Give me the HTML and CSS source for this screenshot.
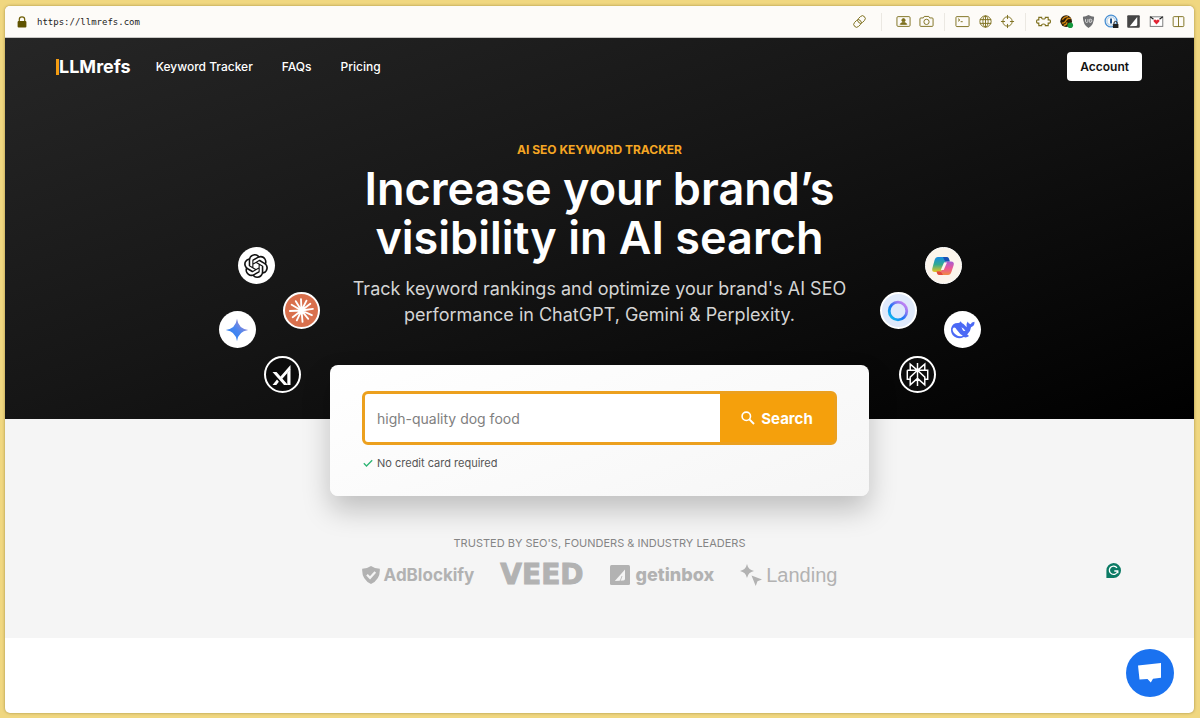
FILE: index.html
```html
<!DOCTYPE html>
<html lang="en">
<head>
    <meta charset="UTF-8">
    <meta name="viewport" content="width=device-width, initial-scale=1.0">
    <title>LLMrefs</title>
    <link rel="stylesheet" href="styles.css">
</head>
<body>

    <div class="window">
        <!-- Browser toolbar -->
        <div class="toolbar">
            <svg class="lock" viewBox="0 0 10 12"><path d="M2.3 6V3.6a2.7 2.7 0 0 1 5.4 0V6" fill="none" stroke="#6f5f08" stroke-width="1.2"/><rect x=".6" y="5" width="8.8" height="6.6" rx="1" fill="#5f5200"/></svg>
            <span class="url">https://llmrefs.com</span>

            <div class="tools tools-one">
                <svg viewBox="0 0 16 16"><g transform="rotate(-45 8 8)"><rect x=".6" y="5" width="8.8" height="6" rx="3"/><rect x="6.6" y="5" width="8.8" height="6" rx="3"/></g></svg>
            </div>
            <span class="divider divider-wide"></span>
            <div class="tools tools-two">
                <svg viewBox="0 0 16 16"><rect x="1" y="2.8" width="14" height="10.4" rx="1.2"/><path d="M3.4 5v-.1M12.6 5v-.1M3.4 11v-.1M12.6 11v-.1"/><circle cx="8" cy="6.6" r="1.7" fill="#7d6f1d"/><path d="M4.6 11q.6-2 3.4-2t3.4 2z" fill="#7d6f1d"/></svg>
                <svg viewBox="0 0 16 16"><path d="M1 5.2q0-1 1-1h2.6l1-1.6h4.8l1 1.6H14q1 0 1 1v7q0 1-1 1H2q-1 0-1-1z"/><circle cx="8" cy="8.4" r="2.8"/><path d="M12.8 6.2v-.1"/></svg>
            </div>
            <span class="divider"></span>
            <div class="tools tools-three">
                <svg viewBox="0 0 16 16"><rect x="1" y="2.8" width="14" height="10.6" rx="1"/><path d="M3.2 5l2 1.4-2 1.4M6 8.2h2.2"/></svg>
                <svg viewBox="0 0 16 16"><circle cx="8" cy="8" r="6"/><ellipse cx="8" cy="8" rx="2.8" ry="6"/><path d="M2 6h12M2 10h12M8 2v12"/></svg>
                <svg viewBox="0 0 16 16"><circle cx="8" cy="8" r="5"/><path d="M8 1v4.4M8 10.6V15M1 8h4.4M10.6 8H15"/></svg>
            </div>
            <span class="divider"></span>
            <div class="tools tools-four">
                <svg viewBox="0 0 16 16"><path d="M3 3.6h3q-.2 1.700 2 1.700t2-1.700h3v2.700q2.400-.5 2.400 1.700T13 9.700v2.700h-3q.2-1.700-2-1.700t-2 1.700H3V9.700Q.6 10.200.6 8T3 6.300z" stroke-width="1.200"/></svg>
                <svg viewBox="0 0 16 16"><circle cx="7.600" cy="7.600" r="6.200" fill="#2c1d08" stroke="none"/><path d="M3.500 6q3-4 6-3M3 9.500q3 1 4.500-2.500T12.500 5M5 12q3 0 3.500-3" stroke="#d58a13" stroke-width="1.500"/><circle cx="12" cy="12" r="3" fill="#15983e" stroke="none"/></svg>
                <svg viewBox="0 0 16 16"><path d="M8 1q3 1.900 6 1.900 0 8.500-6 12.100Q2 11.400 2 2.900 5 2.900 8 1z" fill="#6f7072" stroke="none"/><path d="M4.800 5.500v2.300q0 1.200 1.300 1.200t1.300-1.200V5.500M9.300 5.500V9h.8q1.500 0 1.500-1.800T10 5.500z" stroke="#ddd"/></svg>
                <svg viewBox="0 0 16 16"><circle cx="7.500" cy="7.500" r="6.300" stroke="#4b91d4" stroke-width="1.400"/><circle cx="7.500" cy="7.500" r="4.400" stroke="#9cc3e8"/><path d="M7.500 4.800v5.400" stroke="#174a85" stroke-width="2"/><path d="M10.600 11V9.700a1.800 1.800 0 0 1 3.600 0V11" stroke="#222"/><rect x="9.500" y="10.600" width="5.900" height="4.400" rx=".6" fill="#222" stroke="none"/></svg>
                <svg viewBox="0 0 16 16"><rect x="1.300" y="1.300" width="13.400" height="13.400" rx="1" fill="#454545" stroke="none"/><path d="M12 3.200v8.200q0 1.200-1.200 1.300L4 13z" fill="#fff" stroke="none"/></svg>
                <svg viewBox="0 0 16 16"><rect x="1.300" y="3" width="13.400" height="10.200" fill="#fff" stroke="#777"/><path d="M1.300 3l3.500 2.600M14.700 3l-3.500 2.600" stroke="#222" stroke-width="1.300"/><path d="M8 11.200L5 8.100q-.8-1.700.8-2.100 1.400-.3 2.200 1 .8-1.300 2.200-1 1.600.4.8 2.100z" fill="#e12535" stroke="none"/></svg>
                <svg viewBox="0 0 16 16"><rect x="2.300" y="2.800" width="11.400" height="10.600" rx="1"/><path d="M8 2.800v10.600"/></svg>
            </div>
        </div>

        <header class="hero">
            <nav class="nav">
                <a class="brand" href="#">LLMrefs</a>
                <a href="#">Keyword Tracker</a>
                <a href="#">FAQs</a>
                <a href="#">Pricing</a>
                <a class="account" href="#">Account</a>
            </nav>

            <div class="hero-row">
                <!-- Left engines -->
                <div class="engines">
                    <div class="engine-col lean-left">
                        <span class="engine"><svg viewBox="0 0 24 24" width="24" height="24"><path fill="#111" d="M22.2819 9.8211a5.9847 5.9847 0 0 0-.5157-4.9108 6.0462 6.0462 0 0 0-6.5098-2.9A6.0651 6.0651 0 0 0 4.9807 4.1818a5.9847 5.9847 0 0 0-3.9977 2.9 6.0462 6.0462 0 0 0 .7427 7.0966 5.98 5.98 0 0 0 .511 4.9107 6.051 6.051 0 0 0 6.5146 2.9001A5.9847 5.9847 0 0 0 13.2599 24a6.0557 6.0557 0 0 0 5.7718-4.2058 5.9894 5.9894 0 0 0 3.9977-2.9001 6.0557 6.0557 0 0 0-.7475-7.0729zm-9.022 12.6081a4.4755 4.4755 0 0 1-2.8764-1.0408l.1419-.0804 4.7783-2.7582a.7948.7948 0 0 0 .3927-.6813v-6.7369l2.02 1.1686a.071.071 0 0 1 .038.052v5.5826a4.504 4.504 0 0 1-4.4945 4.4944zm-9.6607-4.1254a4.4708 4.4708 0 0 1-.5346-3.0137l.142.0852 4.783 2.7582a.7712.7712 0 0 0 .7806 0l5.8428-3.3685v2.3324a.0804.0804 0 0 1-.0332.0615L9.74 19.9502a4.4992 4.4992 0 0 1-6.1408-1.6464zM2.3408 7.8956a4.485 4.485 0 0 1 2.3655-1.9728V11.6a.7664.7664 0 0 0 .3879.6765l5.8144 3.3543-2.0201 1.1685a.0757.0757 0 0 1-.071 0l-4.8303-2.7865A4.504 4.504 0 0 1 2.3408 7.872zm16.5963 3.8558L13.1038 8.364 15.1192 7.2a.0757.0757 0 0 1 .071 0l4.8303 2.7913a4.4944 4.4944 0 0 1-.6765 8.1042v-5.6772a.79.79 0 0 0-.407-.667zm2.0107-3.0231l-.142-.0852-4.7735-2.7818a.7759.7759 0 0 0-.7854 0L9.409 9.2297V6.8974a.0662.0662 0 0 1 .0284-.0615l4.8303-2.7866a4.4992 4.4992 0 0 1 6.6802 4.66zM8.3065 12.863l-2.02-1.1638a.0804.0804 0 0 1-.038-.0567V6.0742a4.4992 4.4992 0 0 1 7.3757-3.4537l-.142.0805L8.704 5.459a.7948.7948 0 0 0-.3927.6813zm1.0976-2.3654l2.602-1.4998 2.6069 1.4998v2.9994l-2.5974 1.4997-2.6067-1.4997Z"/></svg></span>
                        <span class="engine"><svg viewBox="0 0 24 24" width="24" height="24"><defs><linearGradient id="gem" x1="0" y1="1" x2="1" y2="0"><stop offset="0" stop-color="#1c7df2"/><stop offset=".5" stop-color="#4a86f0"/><stop offset="1" stop-color="#c58ac0"/></linearGradient></defs><path d="M12 .8Q13.300 10.700 23.200 12 13.300 13.300 12 23.200 10.700 13.300.8 12 10.700 10.700 12 .8z" fill="url(#gem)"/></svg></span>
                    </div>
                    <div class="engine-col engine-low lean-left">
                        <span class="engine claude"><svg viewBox="0 0 26 26" width="27" height="27"><path d="M13 13L12.500 2M13 13l4.800-9.500M13 13l8.500-6.500M13 13l11-1.500M13 13l10 4.500M13 13l6.500 8M13 13l1 11M13 13L8.500 22.500M13 13l-8.500 6.500M13 13L1.800 13.500M13 13L3.500 7.500M13 13L7.500 4" stroke="#fff" stroke-width="1.800" stroke-linecap="round"/></svg></span>
                        <span class="engine dark"><svg viewBox="0 0 24 24" width="24" height="24"><path d="M2.500 9h4L18 22h-4zM2.500 22h3.800l2.600-3.200L7 16.500zM10.500 13.500L20.500 2v4.500l-8.200 9.200z" fill="#fff"/><path d="M17.300 10l3.200-4v16h-3.200z" fill="#fff"/></svg></span>
                    </div>
                </div>

                <div class="hero-text">
                    <p class="eyebrow">AI SEO KEYWORD TRACKER</p>
                    <h1>Increase your brand’s<br>visibility in AI search</h1>
                    <p class="lead">Track keyword rankings and optimize your brand's AI SEO<br>performance in ChatGPT, Gemini &amp; Perplexity.</p>
                </div>

                <!-- Right engines -->
                <div class="engines">
                    <div class="engine-col engine-low lean-right">
                        <span class="engine meta"><svg viewBox="0 0 24 24" width="24" height="24"><defs><linearGradient id="ring" x1="0" y1="1" x2="1" y2="0"><stop offset="0" stop-color="#08cbea"/><stop offset=".45" stop-color="#1f72f5"/><stop offset=".7" stop-color="#8b7af4"/><stop offset="1" stop-color="#e38af2"/></linearGradient></defs><circle cx="12" cy="12" r="8.800" fill="none" stroke="url(#ring)" stroke-width="2.800"/></svg></span>
                        <span class="engine dark"><svg viewBox="0 0 24 24" width="25" height="25"><path d="M12 1v22M12 8L5 2v6M12 8l7-6v6M2.200 8h19.600v8.500H19M2.200 8v8.500H5M12 8l-7 6.500V22l7-6.300M12 8l7 6.500V22l-7-6.300" fill="none" stroke="#fff" stroke-width="1.400"/></svg></span>
                    </div>
                    <div class="engine-col lean-right">
                        <span class="engine copilot"><svg viewBox="0 0 24 24" width="24" height="24"><defs><linearGradient id="cpa" x1="0" y1="0" x2="0" y2="1"><stop offset="0" stop-color="#178be3"/><stop offset=".5" stop-color="#31aa91"/><stop offset="1" stop-color="#ebc51d"/></linearGradient><linearGradient id="cpb" x1="0" y1="0" x2="0" y2="1"><stop offset="0" stop-color="#a65bd5"/><stop offset=".5" stop-color="#eb5796"/><stop offset="1" stop-color="#f18a42"/></linearGradient></defs><path d="M7 3h8.500q2 0 2.500 2l.7 2.500h-3q-2 0-2.600 2l-2 6.500q-.7 2-2.600 2H4Q.5 18 1.300 14.500L3.600 6Q4.500 3 7 3z" fill="url(#cpa)"/><path d="M12 3h3.500q2 0 2.500 2l.7 2.500h-3q-1.700 0-2.300-1.500z" fill="#1b4eb4"/><path d="M17 21H8.500q-2 0-2.500-2l-.4-1.500h3q2 0 2.600-2l2-6q.7-2 2.600-2H20q3.500 0 2.700 3.500L20.400 18Q19.500 21 17 21z" fill="url(#cpb)"/><path d="M12 21H8.500q-2 0-2.500-2l-.4-1.500h3q1.500 0 2.200 1.500z" fill="#e2493c"/><path d="M13 8.500h3l-3.300 7.500H9.800z" fill="#fcf5ec"/></svg></span>
                        <span class="engine"><svg viewBox="0 0 24 24" width="25" height="25"><path d="M1 11Q2.500 5.500 8 5.800q1.500-.2 2.300-1.800Q11 6 13 6.800l3 3Q15.200 6.500 17 4.300q.5 2.200 2.800 2.600Q20.500 5 23.500 4.600 24 8.500 20.200 9.800 19.800 14 16.500 16.800l1.800 1.500q-2.500 2-5 1Q8 21.800 4 18.800.5 16 1 11z" fill="#4b69f5"/><path d="M2.500 11.500q1.800-3 4 .7 3.200 4.500 5.800 5.700-3.300 1.600-6.500-.8-3.300-2.300-3.300-5.600z" fill="#fff"/><path d="M11 9.800q2.500.8 3.800 3.700-2.300.3-2.700-1.300z" fill="#fff"/></svg></span>
                    </div>
                </div>
            </div>
        </header>

        <main class="content">
            <form class="card">
                <div class="search">
                    <input class="search-input" type="text" placeholder="high-quality dog food" aria-label="Keyword">
                    <button class="search-button" type="button">
                        <svg viewBox="0 0 14 14" width="14" height="14"><circle cx="5.300" cy="5.300" r="4.200" fill="none" stroke="#fff" stroke-width="1.600"/><path d="M8.400 8.400l4.600 4.600" stroke="#fff" stroke-width="1.900"/></svg>
                        Search
                    </button>
                </div>
                <p class="note">
                    <svg viewBox="0 0 10 8" width="10" height="8"><path d="M.8 4.200L3.500 7 9.200 1.200" fill="none" stroke="#2db574" stroke-width="1.300"/></svg>
                    No credit card required
                </p>
            </form>

            <p class="trusted">TRUSTED BY SEO'S, FOUNDERS &amp; INDUSTRY LEADERS</p>
            <div class="logos">
                <span class="logo adblockify"><svg viewBox="0 0 18 18" width="18" height="18"><path d="M9 0q4 2.800 8.800 2.800Q18.500 13.500 9 18-.5 13.500.2 2.800 5 2.800 9 0z" fill="#b2b2b2"/><path d="M5 8.800l3 3L13.300 6" fill="none" stroke="#f4f4f4" stroke-width="2.200"/></svg>AdBlockify</span>
                <span class="logo veed">VEED</span>
                <span class="logo getinbox"><svg viewBox="0 0 20 20" width="20" height="20"><rect width="20" height="20" rx="1.500" fill="#b2b2b2"/><path d="M15 4.500v9.300q0 1.500-1.500 1.600L4.800 16z" fill="#f4f4f4"/><path d="M10 16.500l2-5.500" stroke="#b2b2b2" stroke-width=".8"/></svg>getinbox</span>
                <span class="logo landing"><svg viewBox="0 0 22 22" width="22" height="22"><path d="M7 0q1.200 5.800 7 7-5.800 1.200-7 7-1.200-5.800-7-7 5.800-1.200 7-7z" fill="#b2b2b2"/><path d="M11.500 11.500L22 15.500l-4.500 1.800L15.700 22z" fill="#b2b2b2"/></svg>Landing</span>
            </div>
        </main>

        <span class="grammarly"><svg viewBox="0 0 15 15" width="15" height="15"><path d="M7.500 0a7.500 7.500 0 1 1 0 15H.4V7.500A7.500 7.500 0 0 1 7.500 0z" fill="#0b7a64"/><path d="M11 4.800A4.200 4.200 0 1 0 11.700 8H8.300M11.800 8v2.200" fill="none" stroke="#fff" stroke-width="1.300"/></svg></span>
        <button class="chat" type="button" aria-label="Open chat">
            <svg viewBox="0 0 24 20" width="24" height="20"><path d="M0 2.500L23 0v14.800l-8 .9L12.800 19.500 9.500 16l-8 .5z" fill="#fff"/></svg>
        </button>
    </div>

</body>
</html>
```
FILE: styles.css
```css
* {
    box-sizing: border-box;
}
body {
    font-family: Inter, "Liberation Sans", sans-serif;
    background-color: #f0d780;
    margin: 0;
    padding: 6px 6px 5px 5px;
    min-height: 100vh;
    display: flex;
}
a {
    color: inherit;
    text-decoration: none;
}
p, h1 {
    margin: 0;
}
.window {
    position: relative;
    flex: 1;
    background-color: #fff;
    border-radius: 5px;
    overflow: hidden;
    box-shadow: 0 0 3px rgba(90, 70, 0, 0.5);
}
/* Toolbar */
.toolbar {
    display: flex;
    align-items: center;
    height: 32px;
    padding: 0 8px 0 12px;
    background-color: #fdfbf8;
    border-bottom: 1px solid #c9c8c5;
}
.lock {
    width: 10px;
    height: 12px;
}
.url {
    margin-left: 10px;
    font-family: "DejaVu Sans Mono", monospace;
    font-size: 9px;
    color: #222;
}
.tools {
    display: flex;
    justify-content: space-between;
}
.tools svg {
    width: 15px;
    height: 15px;
    fill: none;
    stroke: #7d6f1d;
}
.tools-one {
    margin-left: auto;
}
.tools-two {
    width: 38px;
}
.tools-three {
    width: 60px;
}
.tools-four {
    width: 150px;
}
.divider {
    width: 1px;
    height: 18px;
    margin: 0 10px;
    background-color: #ebe8e2;
}
.divider-wide {
    margin: 0 14px;
}
/* Hero */
.hero {
    background: linear-gradient(160deg, #262626, #161616 45%, #000);
    color: #fff;
    padding-bottom: 26px;
}
.nav {
    display: flex;
    align-items: center;
    gap: 29px;
    padding: 14px 52px 14px 51px;
    font-size: 12px;
    font-weight: 500;
}
.brand {
    font-size: 18px;
    font-weight: 700;
    line-height: 16px;
    border-left: 3px solid #f39c12;
    margin-right: -4px;
}
.account {
    margin-left: auto;
    padding: 0 13px;
    line-height: 29px;
    background-color: #fff;
    color: #111;
    font-weight: 600;
    border-radius: 4px;
}
.hero-row {
    display: flex;
    justify-content: center;
    align-items: flex-end;
    padding-top: 45px;
}
.hero-text {
    width: 560px;
    align-self: flex-start;
    text-align: center;
}
.eyebrow {
    font-size: 12px;
    font-weight: 700;
    line-height: 20px;
    color: #f5a623;
    margin-bottom: 4px;
}
h1 {
    font-size: 45px;
    font-weight: 600;
    line-height: 49px;
    white-space: nowrap;
}
.lead {
    margin-top: 14px;
    font-size: 18px;
    line-height: 26px;
    color: #d4d4d4;
    white-space: nowrap;
}
.engines {
    display: flex;
    margin-top: 107px;
}
.engine-col {
    display: flex;
    flex-direction: column;
    gap: 27px;
    width: 56px;
}
.engine-low {
    padding-top: 45px;
}
.engine-col + .engine-col {
    margin-left: -11px;
}
.engine {
    display: flex;
    align-items: center;
    justify-content: center;
    width: 37px;
    height: 37px;
    border-radius: 50%;
    background-color: #fff;
}
.lean-left .engine:first-child,
.lean-right .engine:last-child {
    align-self: flex-end;
}
.claude {
    background-color: #d9704d;
    border: 2px solid #fff;
}
.dark {
    background-color: #0c0c0c;
    border: 2px solid #fff;
}
.meta {
    background-color: #dfe9fb;
    border: 2px solid #fff;
}
.copilot {
    background-color: #fcf5ec;
    border: 1px solid #fff;
}
/* Search card */
.content {
    display: flex;
    flex-direction: column;
    align-items: center;
    padding-bottom: 51px;
    background-color: #f5f5f5;
}
.card {
    position: relative;
    width: 539px;
    max-width: 100%;
    margin-top: -54px;
    padding: 26px 32px 25px;
    border-radius: 8px;
    background: linear-gradient(160deg, #fff, #f6f6f6);
    box-shadow: 0 14px 28px rgba(0, 0, 0, 0.22);
}
.search {
    display: flex;
    height: 54px;
    border: 3px solid #eca01e;
    border-radius: 6px;
    background-color: #f5a00c;
}
.search-input {
    flex: 1;
    min-width: 0;
    padding: 0 12px;
    border: none;
    border-radius: 3px 0 0 3px;
    background-color: #fff;
    font-family: inherit;
    font-size: 14px;
    outline: none;
}
.search-input::placeholder {
    color: #808080;
}
.search-button {
    display: flex;
    align-items: center;
    justify-content: center;
    gap: 6px;
    width: 114px;
    border: none;
    background-color: #f5a00c;
    color: #fff;
    font-family: inherit;
    font-size: 15px;
    font-weight: 700;
    cursor: pointer;
}
.note {
    display: flex;
    align-items: center;
    gap: 4px;
    margin-top: 10px;
    padding-left: 1px;
    font-size: 11px;
    line-height: 16px;
    color: #555;
}
/* Logos */
.trusted {
    margin-top: 39px;
    font-size: 11px;
    line-height: 16px;
    color: #858585;
}
.logos {
    display: flex;
    align-items: center;
    gap: 26px;
    margin-top: 12px;
    height: 24px;
}
.logo {
    display: flex;
    align-items: center;
    gap: 4px;
    color: #b2b2b2;
    font-size: 18px;
    line-height: 24px;
}
.adblockify {
    font-size: 17px;
    font-weight: 700;
}
.veed {
    font-family: "DejaVu Sans", sans-serif;
    font-size: 28px;
    font-weight: 700;
    -webkit-text-stroke: 1px #b2b2b2;
}
.getinbox {
    gap: 6px;
    font-weight: 800;
}
.landing {
    font-family: "Liberation Sans", sans-serif;
    font-size: 20px;
}
/* Floating widgets */
.grammarly {
    position: absolute;
    right: 73px;
    bottom: 136px;
    height: 15px;
}
.chat {
    position: absolute;
    right: 20px;
    bottom: 16px;
    width: 48px;
    height: 48px;
    display: flex;
    align-items: center;
    justify-content: center;
    border: none;
    border-radius: 50%;
    background-color: #1a72f0;
    cursor: pointer;
}
```
